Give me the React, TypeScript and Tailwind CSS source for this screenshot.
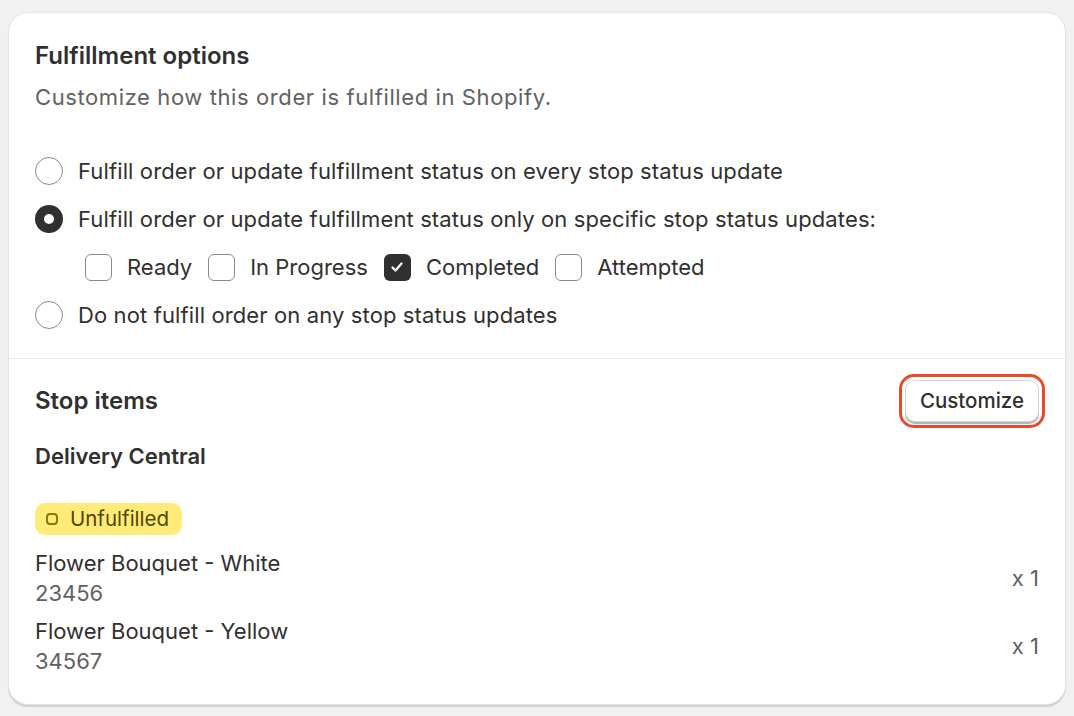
import React from "react";

const font = { fontFamily: "Inter, 'Noto Sans', sans-serif" };

const Radio = ({ checked }: { checked?: boolean }) =>
    checked ? (
        <span className="w-[28px] h-[28px] rounded-full bg-[#303030] flex items-center justify-center shrink-0">
            <span className="w-[10px] h-[10px] rounded-full bg-white" />
        </span>
    ) : (
        <span className="w-[28px] h-[28px] rounded-full border-[1.5px] border-[#8a8a8a] bg-white shrink-0" />
    );

const Checkbox = ({ checked, label }: { checked?: boolean; label: string }) => (
    <div className="flex items-center gap-[15px]">
        {checked ? (
            <span className="w-[27px] h-[27px] rounded-[6px] bg-[#303030] flex items-center justify-center">
                <svg width="16" height="16" viewBox="0 0 16 16" fill="none">
                    <path d="M3.5 8.5l3 3 6-7" stroke="white" strokeWidth="2.2" strokeLinecap="round" strokeLinejoin="round" />
                </svg>
            </span>
        ) : (
            <span className="w-[27px] h-[27px] rounded-[6px] border-[1.5px] border-[#8a8a8a] bg-white" />
        )}
        <span>{label}</span>
    </div>
);

const items = [
    { name: "Flower Bouquet - White", sku: "23456", qty: 1 },
    { name: "Flower Bouquet - Yellow", sku: "34567", qty: 1 },
];

export default function App() {
    return (
        <div className="w-[1074px] h-[716px] bg-[#f1f1f1] pt-[12px] pl-[8px] pr-[8px]" style={font}>
            <div className="bg-white rounded-[20px] border border-[#e3e3e3] shadow-[0_2px_1px_rgba(0,0,0,0.14)] h-[693px] text-[#303030] text-[22px]">
                <div className="px-[26px] pt-[29px] pb-[29px]">
                    <h2 className="text-[24px] font-semibold leading-[28px]">Fulfillment options</h2>
                    <p className="text-[#616161] leading-[28px] mt-[13px] tracking-[0.6px]">Customize how this order is fulfilled in Shopify.</p>
                    <div className="mt-[46px] flex flex-col gap-[20px] tracking-[0.12px]">
                        <label className="flex items-center gap-[15px] h-[28px]">
                            <Radio />
                            <span>Fulfill order or update fulfillment status on every stop status update</span>
                        </label>
                        <label className="flex items-center gap-[15px] h-[28px]">
                            <Radio checked />
                            <span>Fulfill order or update fulfillment status only on specific stop status updates:</span>
                        </label>
                        <div className="flex items-center gap-[16px] pl-[50px] h-[28px] tracking-normal">
                            <Checkbox label="Ready" />
                            <Checkbox label="In Progress" />
                            <Checkbox checked label="Completed" />
                            <Checkbox label="Attempted" />
                        </div>
                        <label className="flex items-center gap-[15px] h-[28px]">
                            <Radio />
                            <span>Do not fulfill order on any stop status updates</span>
                        </label>
                    </div>
                </div>
                <div className="border-t border-[#ebebeb] px-[26px] pt-[21px]">
                    <div className="flex items-center justify-between">
                        <h3 className="font-semibold text-[24px]">Stop items</h3>
                        <div className="relative">
                            <span className="absolute -inset-[6px] rounded-[15px] border-[3px] border-[#e84a2c]" />
                            <button className="relative h-[42px] px-[14px] rounded-[10px] bg-white border border-[#d4d4d4] shadow-[0_2px_0_#b5b5b5] font-medium text-[20.5px] text-[#303030]">
                                Customize
                            </button>
                        </div>
                    </div>
                    <div className="font-semibold mt-[20px] leading-[28px]">Delivery Central</div>
                    <div className="mt-[31px]">
                        <span className="inline-flex items-center gap-[12px] bg-[#ffeb78] text-[#4f4700] rounded-[10px] h-[32px] pl-[11px] pr-[13px]">
                            <span className="w-[12px] h-[12px] rounded-[4px] border-2 border-[#8a7a00]" />
                            <span className="text-[20.5px]">Unfulfilled</span>
                        </span>
                    </div>
                    <div className="mt-[13px] flex flex-col gap-[8px]">
                        {items.map((it) => (
                            <div key={it.sku} className="flex items-center justify-between">
                                <div className="leading-[30px]">
                                    <div>{it.name}</div>
                                    <div className="text-[#616161]">{it.sku}</div>
                                </div>
                                <div className="text-[#616161]">x {it.qty}</div>
                            </div>
                        ))}
                    </div>
                </div>
            </div>
        </div>
    );
}
